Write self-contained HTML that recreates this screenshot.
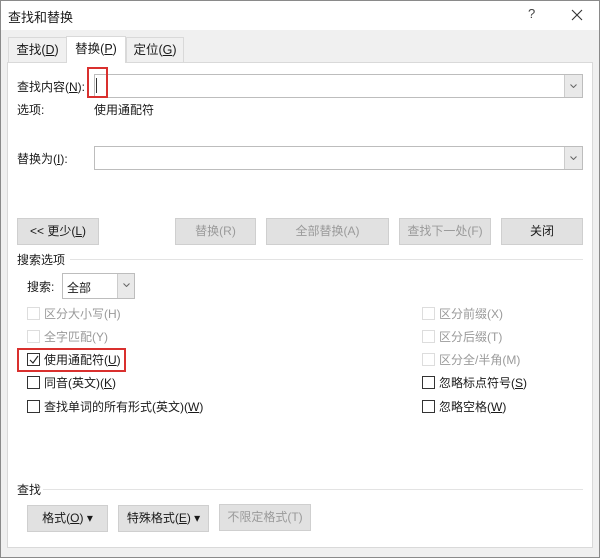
<!DOCTYPE html>
<html><head><meta charset="utf-8"><style>
*{box-sizing:border-box;margin:0;padding:0}
body{width:600px;height:558px;background:#f0f0f0;font-family:"Liberation Sans","Noto Sans CJK SC",sans-serif;font-size:12px;color:#1a1a1a;position:relative;overflow:hidden}
.a{position:absolute;white-space:nowrap}
.title{left:0;top:0;width:600px;height:30px;background:#fff}
.tab{height:25px;top:37px;border:1px solid #d9d9d9;border-bottom:none;background:#f0f0f0;text-align:center;line-height:24px;font-size:12.5px}
.panel{left:7px;top:62px;width:586px;height:486px;background:#fff;border:1px solid #d9d9d9}
.inp{height:24px;border:1px solid #bdbdbd;background:#fff}
.dd{width:18px;height:22px;top:0;right:0;background:#e9e9e9;border-left:1px solid #ccc}
.dd svg{position:absolute;left:5px;top:9px}
.btn{height:27px;background:#e1e1e1;border:1px solid #cfcfcf;text-align:center;line-height:25px;font-size:12px}
.dis{color:#9a9a9a}
.cb{width:13px;height:13px;border:1px solid #333;background:#fff}
.cbd{border-color:#ddd}
.line{height:1px;background:#e3e3e3}
u{text-decoration:underline}
</style></head><body>
<div class="a title"></div>
<div class="a" style="left:0;top:0;width:600px;height:558px;border:1px solid #8a8a8a;z-index:5;pointer-events:none"></div>
<div class="a" style="left:8px;top:7px;font-size:13px">查找和替换</div>
<div class="a" style="left:528px;top:6px;font-size:13px;color:#444">?</div>
<svg class="a" style="left:571px;top:9px" width="12" height="12"><path d="M1 1L11 11M11 1L1 11" stroke="#333" stroke-width="1.1"/></svg>

<div class="a tab" style="left:8px;width:59px">查找(<u>D</u>)</div>
<div class="a tab" style="left:66px;width:60px;background:#fff;top:36px;height:27px;z-index:2">替换(<u>P</u>)</div>
<div class="a tab" style="left:126px;width:58px">定位(<u>G</u>)</div>
<div class="a panel"></div>

<div class="a" style="left:17px;top:78px">查找内容(<u>N</u>):</div>
<div class="a inp" style="left:94px;top:74px;width:489px"><div class="a dd"><svg width="7" height="4"><path d="M0.5 0.5L3.5 3.5L6.5 0.5" fill="none" stroke="#666"/></svg></div></div>
<div class="a" style="left:96px;top:78px;width:1px;height:15px;background:#333"></div>
<div class="a" style="left:87px;top:67px;width:21px;height:31px;border:2px solid #d9302e"></div>

<div class="a" style="left:17px;top:101px">选项:</div>
<div class="a" style="left:94px;top:101px">使用通配符</div>

<div class="a" style="left:17px;top:150px">替换为(<u>I</u>):</div>
<div class="a inp" style="left:94px;top:146px;width:489px"><div class="a dd"><svg width="7" height="4"><path d="M0.5 0.5L3.5 3.5L6.5 0.5" fill="none" stroke="#666"/></svg></div></div>

<div class="a btn" style="left:17px;top:218px;width:82px">&lt;&lt; 更少(<u>L</u>)</div>
<div class="a btn dis" style="left:175px;top:218px;width:81px">替换(R)</div>
<div class="a btn dis" style="left:266px;top:218px;width:123px">全部替换(A)</div>
<div class="a btn dis" style="left:399px;top:218px;width:92px">查找下一处(F)</div>
<div class="a btn" style="left:501px;top:218px;width:82px">关闭</div>

<div class="a" style="left:17px;top:251px">搜索选项</div>
<div class="a line" style="left:70px;top:259px;width:513px"></div>
<div class="a" style="left:27px;top:278px">搜索:</div>
<div class="a inp" style="left:62px;top:273px;width:73px;height:26px"><span class="a" style="left:4px;top:5px">全部</span><div class="a dd" style="height:24px;width:17px"><svg width="7" height="4"><path d="M0.5 0.5L3.5 3.5L6.5 0.5" fill="none" stroke="#666"/></svg></div></div>

<div class="a cb cbd" style="left:27px;top:307px"></div><div class="a dis" style="left:44px;top:305px">区分大小写(H)</div>
<div class="a cb cbd" style="left:27px;top:330px"></div><div class="a dis" style="left:44px;top:328px">全字匹配(Y)</div>
<div class="a cb" style="left:27px;top:353px"><svg class="a" style="left:1px;top:1px" width="10" height="10"><path d="M1 5L4 8L9 1" fill="none" stroke="#222" stroke-width="1.1"/></svg></div><div class="a" style="left:44px;top:351px">使用通配符(<u>U</u>)</div>
<div class="a" style="left:17px;top:348px;width:109px;height:24px;border:2px solid #d9302e"></div>
<div class="a cb" style="left:27px;top:376px"></div><div class="a" style="left:44px;top:374px">同音(英文)(<u>K</u>)</div>
<div class="a cb" style="left:27px;top:400px"></div><div class="a" style="left:44px;top:398px">查找单词的所有形式(英文)(<u>W</u>)</div>

<div class="a cb cbd" style="left:422px;top:307px"></div><div class="a dis" style="left:439px;top:305px">区分前缀(X)</div>
<div class="a cb cbd" style="left:422px;top:330px"></div><div class="a dis" style="left:439px;top:328px">区分后缀(T)</div>
<div class="a cb cbd" style="left:422px;top:353px"></div><div class="a dis" style="left:439px;top:351px">区分全/半角(M)</div>
<div class="a cb" style="left:422px;top:376px"></div><div class="a" style="left:439px;top:374px">忽略标点符号(<u>S</u>)</div>
<div class="a cb" style="left:422px;top:400px"></div><div class="a" style="left:439px;top:398px">忽略空格(<u>W</u>)</div>

<div class="a" style="left:17px;top:481px">查找</div>
<div class="a line" style="left:43px;top:489px;width:540px"></div>
<div class="a btn" style="left:27px;top:505px;width:81px">格式(<u>O</u>) ▾</div>
<div class="a btn" style="left:118px;top:505px;width:91px">特殊格式(<u>E</u>) ▾</div>
<div class="a btn dis" style="left:219px;top:504px;width:92px">不限定格式(T)</div>
</body></html>
